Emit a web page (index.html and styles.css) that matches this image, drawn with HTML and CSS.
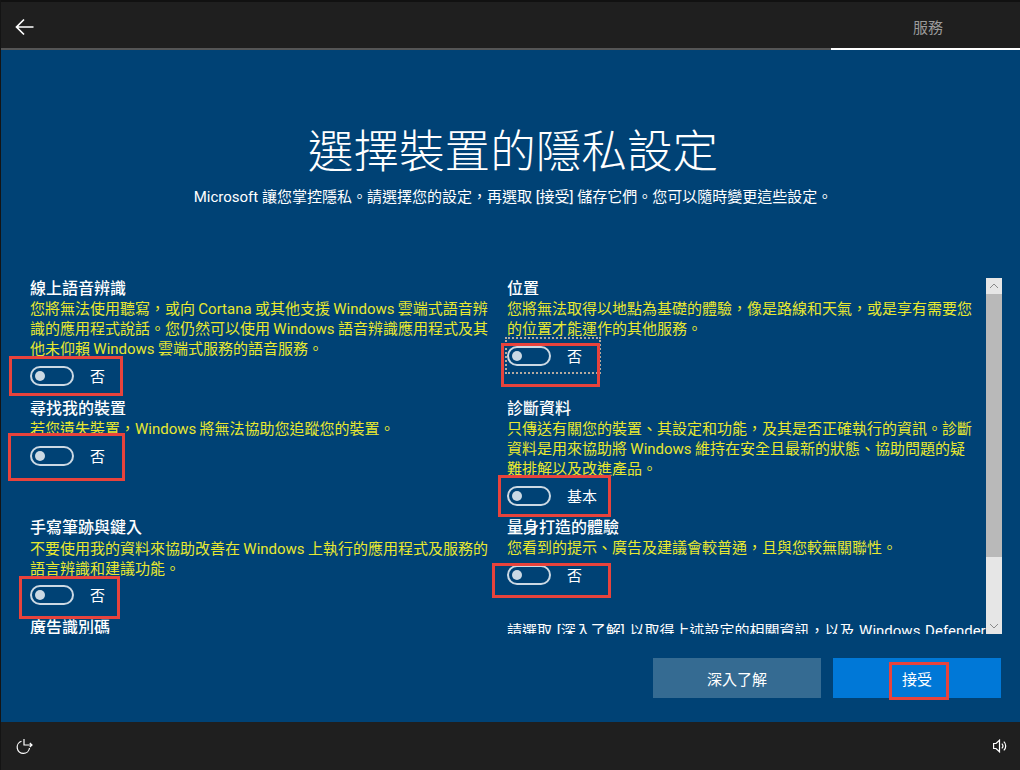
FILE: index.html
```html
<!DOCTYPE html>
<html lang="zh-Hant">
<head>
<meta charset="utf-8">
<title>選擇裝置的隱私設定</title>
<link rel="stylesheet" href="styles.css">
</head>
<body>
<header class="topbar">
  <button class="back" aria-label="返回">
    <svg width="20" height="18" viewBox="0 0 20 18"><path d="M18.500 9H1.500M9 1.500 1.500 9 9 16.500" fill="none" stroke="#fff" stroke-width="1.700"/></svg>
  </button>
  <div class="tab">服務</div>
</header>
<main class="main">
  <div class="intro">
    <h1 class="title">選擇裝置的隱私設定</h1>
    <p class="subtitle">Microsoft 讓您掌控隱私。請選擇您的設定，再選取 [接受] 儲存它們。您可以隨時變更這些設定。</p>
  </div>
  <div class="region">
    <div class="settings">
      <section class="item">
        <h2 class="name">線上語音辨識</h2>
        <p class="desc">您將無法使用聽寫，或向 Cortana 或其他支援 Windows 雲端式語音辨<br>識的應用程式說話。您仍然可以使用 Windows 語音辨識應用程式及其<br>他未仰賴 Windows 雲端式服務的語音服務。</p>
        <div class="toggle"><span class="switch"></span><span class="state">否</span></div>
      </section>
      <section class="item">
        <h2 class="name">位置</h2>
        <p class="desc">您將無法取得以地點為基礎的體驗，像是路線和天氣，或是享有需要您<br>的位置才能運作的其他服務。</p>
        <div class="toggle focused"><span class="switch"></span><span class="state">否</span></div>
      </section>
      <section class="item">
        <h2 class="name">尋找我的裝置</h2>
        <p class="desc">若您遺失裝置，Windows 將無法協助您追蹤您的裝置。</p>
        <div class="toggle"><span class="switch"></span><span class="state">否</span></div>
      </section>
      <section class="item">
        <h2 class="name">診斷資料</h2>
        <p class="desc">只傳送有關您的裝置、其設定和功能，及其是否正確執行的資訊。診斷<br>資料是用來協助將 Windows 維持在安全且最新的狀態、協助問題的疑<br>難排解以及改進產品。</p>
        <div class="toggle"><span class="switch"></span><span class="state">基本</span></div>
      </section>
      <section class="item">
        <h2 class="name">手寫筆跡與鍵入</h2>
        <p class="desc desc-low">不要使用我的資料來協助改善在 Windows 上執行的應用程式及服務的<br>語言辨識和建議功能。</p>
        <div class="toggle toggle-low"><span class="switch"></span><span class="state">否</span></div>
      </section>
      <section class="item">
        <h2 class="name">量身打造的體驗</h2>
        <p class="desc">您看到的提示、廣告及建議會較普通，且與您較無關聯性。</p>
        <div class="toggle"><span class="switch"></span><span class="state">否</span></div>
      </section>
      <section class="item">
        <h2 class="name">廣告識別碼</h2>
      </section>
      <p class="note">請選取 [深入了解] 以取得上述設定的相關資訊，以及 Windows Defender</p>
    </div>
    <div class="scrollbar">
      <span class="arrow"><svg width="10" height="6" viewBox="0 0 10 6"><path d="M1 5 5 1 9 5" fill="none" stroke="#8a8a8a" stroke-width="1"/></svg></span>
      <span class="thumb"></span>
      <span class="track"></span>
      <span class="arrow"><svg width="10" height="6" viewBox="0 0 10 6"><path d="M1 1 5 5 9 1" fill="none" stroke="#8a8a8a" stroke-width="1"/></svg></span>
    </div>
  </div>
  <div class="actions">
    <button class="btn btn-secondary">深入了解</button>
    <button class="btn btn-primary">接受</button>
  </div>
</main>
<footer class="footbar">
  <svg width="18" height="18" viewBox="0 0 18 18"><path d="M5.500 4.300A6.200 6.200 0 1 0 13.500 11" fill="none" stroke="#fff" stroke-width="1.200"/><path d="M8 2V8H16M13.800 6 16 8 13.800 10" fill="none" stroke="#fff" stroke-width="1.200"/></svg>
  <svg width="14" height="14" viewBox="0 0 14 14"><path d="M.6 4.500H3L6.500 1.200V12.800L3 9.500H.6Z" fill="none" stroke="#fff" stroke-width="1.200"/><path d="M8.800 4.600A3.400 3.400 0 0 1 8.800 9.400M10.800 2.600A6 6 0 0 1 10.800 11.400" fill="none" stroke="#fff" stroke-width="1.200"/></svg>
</footer>
<span class="mark mark-a"></span>
<span class="mark mark-b"></span>
<span class="mark mark-c"></span>
<span class="mark mark-d"></span>
<span class="mark mark-e"></span>
<span class="mark mark-f"></span>
<span class="mark mark-g"></span>
</body>
</html>
```
FILE: styles.css
```css
* { box-sizing: border-box; }
html, body { margin: 0; height: 100%; }
body {
  position: relative;
  width: 1020px;
  height: 770px;
  overflow: hidden;
  display: flex;
  flex-direction: column;
  background: #1f1f1f;
  color: #fff;
  font-family: Roboto, "Noto Sans CJK TC", sans-serif;
  border-left: 1px solid #141414;
}
.topbar {
  flex: none;
  height: 50px;
  display: flex;
  justify-content: space-between;
  background: #1f1f1f;
  border-top: 2px solid #111;
  border-bottom: 2px solid #555;
  position: relative;
}
.back {
  width: 48px;
  height: 46px;
  padding: 4px 0 0 14px;
  border: 0;
  background: none;
  display: flex;
  align-items: center;
}
.tab {
  width: 189px;
  height: 48px;
  margin-bottom: -2px;
  padding: 2px 0 0 5px;
  display: flex;
  align-items: center;
  justify-content: center;
  font-size: 15px;
  color: #9a9a9a;
  border-bottom: 2px solid #fff;
}
.main {
  flex: 1;
  display: flex;
  flex-direction: column;
  background: #004275;
  min-height: 0;
}
.intro { padding: 73px 0 0 5px; text-align: center; height: 228px; }
.title { margin: 0; font-size: 45.600px; line-height: 60px; font-weight: 300; }
.subtitle { margin: 4px 0 0; font-size: 15px; line-height: 20px; }
.region {
  height: 356px;
  display: flex;
  padding-left: 29px;
  padding-right: 18px;
}
.settings {
  flex: 1;
  min-width: 0;
  overflow: hidden;
  padding-top: 1px;
  display: grid;
  grid-template-columns: 460px 1fr;
  grid-template-rows: 120px 119px 100px 20px;
  column-gap: 17px;
}
.item { min-width: 0; }
.name { margin: 0; font-size: 16px; line-height: 20px; font-weight: 500; white-space: nowrap; }
.desc { margin: 0; font-size: 15px; line-height: 20px; color: #e8e830; white-space: nowrap; word-spacing: -0.4px; }
.desc-low { padding-top: 1px; }
.note { margin: 3px 0 0; font-size: 15px; line-height: 20px; white-space: nowrap; word-spacing: 1px; }
.toggle { margin-top: 7px; display: flex; align-items: center; gap: 16px; position: relative; height: 20px; }
.toggle-low { margin-top: 6px; }
.toggle.focused::after {
  content: "";
  position: absolute;
  left: -2px;
  top: -9px;
  width: 92px;
  height: 33px;
  border: 2px dotted #b5aaa0;
}
.switch {
  position: relative;
  flex: none;
  width: 44px;
  height: 20px;
  border: 2px solid #ccd9e4;
  border-radius: 10px;
}
.switch::before {
  content: "";
  position: absolute;
  left: 3px;
  top: 3px;
  width: 10px;
  height: 10px;
  border-radius: 50%;
  background: #ccd9e4;
}
.state { font-size: 15px; line-height: 20px; padding-top: 1px; }
.scrollbar {
  flex: none;
  width: 16px;
  display: flex;
  flex-direction: column;
  background: #e6e6e6;
}
.arrow { flex: none; height: 16px; display: flex; align-items: center; justify-content: center; }
.thumb { flex: none; height: 263px; background: #b9b9b9; }
.track { flex: 1; }
.actions {
  margin-top: 24px;
  padding-right: 19px;
  display: flex;
  justify-content: flex-end;
  gap: 12px;
}
.btn {
  width: 168px;
  height: 40px;
  border: 0;
  padding: 0;
  color: #fff;
  font: inherit;
  font-size: 15px;
}
.btn-secondary { background: #356b92; }
.btn-primary { background: #0078d7; }
.footbar {
  flex: none;
  height: 48px;
  display: flex;
  align-items: center;
  justify-content: space-between;
  padding: 0 13px 0 15px;
  background: #1f1f1f;
}
.mark { position: absolute; border: 3px solid #e8433c; }
.mark-a { left: 8px; top: 356px; width: 114px; height: 40px; }
.mark-b { left: 7px; top: 433px; width: 117px; height: 48px; }
.mark-c { left: 18px; top: 576px; width: 101px; height: 43px; }
.mark-d { left: 500px; top: 343px; width: 99px; height: 44px; }
.mark-e { left: 497px; top: 475px; width: 113px; height: 42px; }
.mark-f { left: 491px; top: 563px; width: 119px; height: 35px; }
.mark-g { left: 888px; top: 662px; width: 60px; height: 38px; }
```
